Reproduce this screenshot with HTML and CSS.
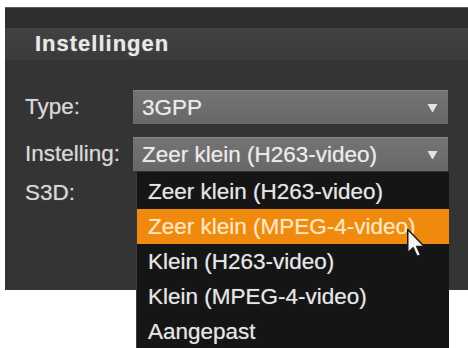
FILE: index.html
```html
<!DOCTYPE html>
<html>
<head>
<meta charset="utf-8">
<link rel="stylesheet" href="styles.css">
</head>
<body>
<div class="panel">
  <div class="topstrip"></div>
  <div class="header"><span class="title">Instellingen</span></div>
  <div class="body">
    <div class="row">
      <div class="label">Type:</div>
      <div class="field">
        <span class="value">3GPP</span>
        <svg class="arrow" width="11" height="10" viewBox="0 0 11 10"><path d="M0.5 1 L10.5 1 L6.2 8.6 Q5.5 9.6 4.8 8.6 Z" fill="#e4e4e4"/></svg>
      </div>
    </div>
    <div class="row">
      <div class="label">Instelling:</div>
      <div class="field open">
        <span class="value">Zeer klein (H263-video)</span>
        <svg class="arrow" width="11" height="10" viewBox="0 0 11 10"><path d="M0.5 1 L10.5 1 L6.2 8.6 Q5.5 9.6 4.8 8.6 Z" fill="#e4e4e4"/></svg>
        <ul class="list">
          <li>Zeer klein (H263-video)</li>
          <li class="sel">Zeer klein (MPEG-4-video)</li>
          <li>Klein (H263-video)</li>
          <li>Klein (MPEG-4-video)</li>
          <li>Aangepast</li>
        </ul>
        <svg class="cursor" width="20" height="30" viewBox="0 0 13 20"><path d="M1 1 L1 16.5 L4.6 13.2 L7.2 19 L9.6 18 L7 12.3 L12 12.3 Z" fill="#f4f4f4" stroke="#1a1a1a" stroke-width="1" stroke-linejoin="round"/></svg>
      </div>
    </div>
    <div class="row last">
      <div class="label">S3D:</div>
    </div>
  </div>
</div>
</body>
</html>
```
FILE: styles.css
```css
html, body {
  margin: 0;
  padding: 0;
  background: #ffffff;
}
body {
  width: 468px;
  height: 348px;
  overflow: hidden;
  font-family: "Liberation Sans", Arial, sans-serif;
}
.panel {
  margin: 7px 0 0 5px;
  width: 463px;
  height: 283px;
  background: #343434;
  border-top: 1px solid #5a5a5a;
  box-sizing: border-box;
  position: relative;
}
.topstrip {
  height: 20px;
  background: #2e2e2e;
}
.header {
  height: 32px;
  background: linear-gradient(#424242, #3a3a3a);
  display: flex;
  align-items: center;
  padding-left: 30px;
}
.title {
  font-size: 22px;
  font-weight: bold;
  letter-spacing: 1px;
  color: #e8e8e8;
  text-shadow: 0 0 1px rgba(255, 255, 255, 0.5);
}
.body {
  padding: 30px 20px 0 20px;
  display: flex;
  flex-direction: column;
  gap: 13px;
}
.row {
  display: flex;
  align-items: center;
  height: 34px;
}
.row.last {
  margin-top: -8px;
}
.label {
  width: 108px;
  font-size: 22.5px;
  color: #d8d8d8;
  text-shadow: 0 0 1px rgba(255, 255, 255, 0.45);
}
.field {
  flex: 1;
  height: 34px;
  background: linear-gradient(#747474, #686868);
  border-top: 1px solid #858585;
  box-sizing: border-box;
  display: flex;
  align-items: center;
  justify-content: space-between;
  padding: 0 10px 0 9px;
  position: relative;
}
.value {
  font-size: 22.5px;
  color: #ececec;
  text-shadow: 0 0 1px rgba(255, 255, 255, 0.45);
}
.list {
  position: absolute;
  left: 3px;
  top: 34px;
  width: 313px;
  margin: 0;
  padding: 2px 0 0 0;
  list-style: none;
  background: #151515;
  border-left: 1px solid #3a3a3a;
  box-sizing: border-box;
  z-index: 2;
}
.list li {
  height: 35px;
  line-height: 35px;
  padding-left: 11px;
  font-size: 22.5px;
  color: #e6e6e6;
  white-space: nowrap;
  text-shadow: 0 0 1px rgba(255, 255, 255, 0.45);
}
.list li.sel {
  background: #f08a0e;
  color: #fde6c2;
  text-shadow: 0 0 1px rgba(255, 240, 210, 0.5);
}
.cursor {
  position: absolute;
  left: 273px;
  top: 90px;
  z-index: 3;
}
```
